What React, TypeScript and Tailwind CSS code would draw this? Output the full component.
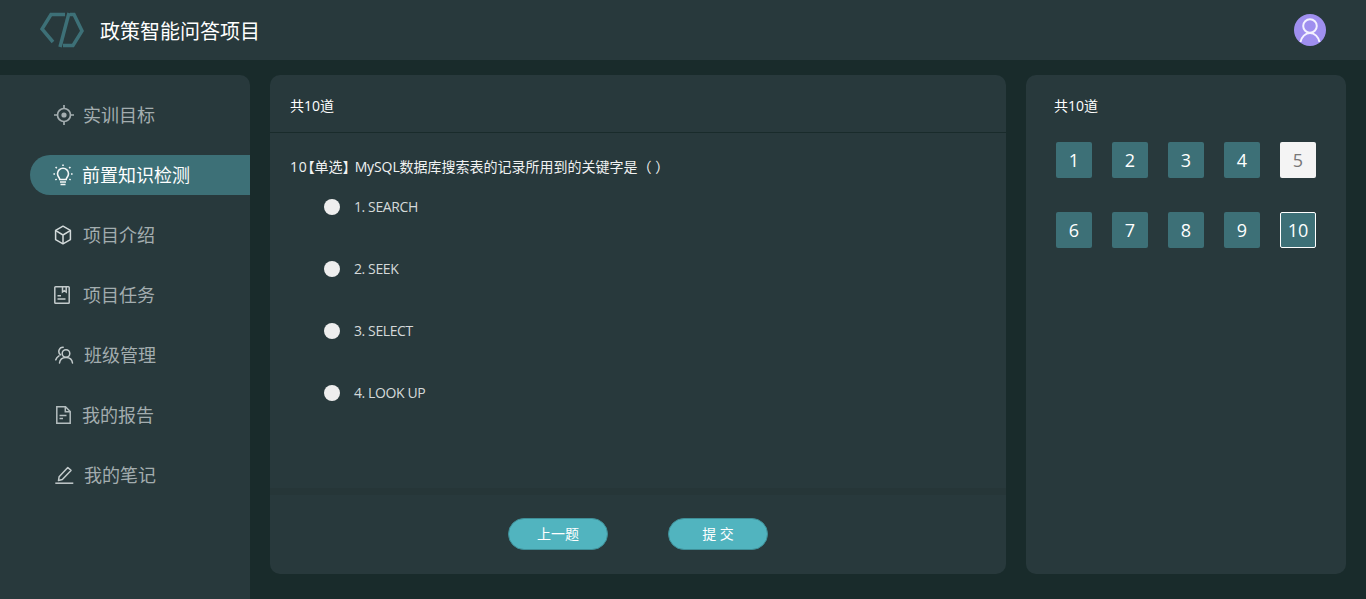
import React from 'react';

const Target = () => (
  <svg width="22" height="22" viewBox="0 0 22 22" fill="none" stroke="currentColor" strokeWidth="1.7">
    <circle cx="11" cy="11" r="6.5" />
    <circle cx="11" cy="11" r="2.6" fill="currentColor" stroke="none" />
    <path d="M11 1v3.500M11 17.500V21M1 11h3.500M17.500 11H21" />
  </svg>
);

const Bulb = () => (
  <svg width="20" height="22" viewBox="0 0 20 22" fill="none" stroke="#f4f6f6" strokeWidth="1.6">
    <path d="M6.800 15.500c0-2-2.300-2.800-2.300-5.700a5.500 5.500 0 0 1 11 0c0 2.900-2.300 3.700-2.300 5.700z" />
    <path d="M7 18h6M7.500 20.500h5" />
    <path d="M10 .5v1.600M2.600 3l1.200 1.200M17.400 3l-1.200 1.200M.4 10h1.600M18 10h1.600M2.400 16l1.200-1M17.600 16l-1.200-1" />
  </svg>
);

const Box = () => (
  <svg width="18" height="20" viewBox="0 0 18 20" fill="none" stroke="#d3dada" strokeWidth="1.5" strokeLinejoin="round">
    <path d="M9 1.200l7.400 4.200v9.200L9 18.800l-7.400-4.200V5.400z" />
    <path d="M1.800 5.600L9 10l7.200-4.400M9 10v8.600" />
  </svg>
);

const Task = () => (
  <svg width="16" height="18" viewBox="0 0 16 18" fill="none" stroke="#c3cbcc" strokeWidth="1.5">
    <rect x="0.8" y="0.8" width="14.400" height="16.400" rx="0.8" />
    <path d="M8.500 1v5l1.800-1.300L12.200 6V1" />
    <path d="M3.500 9.800h3.500M3.500 13h8" />
  </svg>
);

const Users = () => (
  <svg width="19" height="18" viewBox="0 0 19 18" fill="none" stroke="#c3cbcc" strokeWidth="1.5" strokeLinecap="round">
    <circle cx="11" cy="7.500" r="3.800" />
    <path d="M4.500 17c.4-3.400 3-5.600 6.500-5.600s6.100 2.200 6.500 5.600" />
    <path d="M5.600 8.800A4.200 4.200 0 0 1 8.200 1.200M4 9.800C2.400 10.800 1.300 12 .8 13.800" />
  </svg>
);

const Report = () => (
  <svg width="15" height="18" viewBox="0 0 15 18" fill="none" stroke="#b4bebf" strokeWidth="1.5">
    <path d="M.8.8h8.700l4.700 4.700v11.700H.8z" />
    <path d="M9.300.8v5h5M3.500 9.500h7M3.500 12.500h3.500" />
  </svg>
);

const Pen = () => (
  <svg width="19" height="18" viewBox="0 0 19 18" fill="none" stroke="#c3cbcc" strokeWidth="1.5" strokeLinejoin="round">
    <path d="M3.500 14.500l.6-3.700L12.800 1.500l3.200 2.900-8.700 9.200z" />
    <path d="M.3 17.200h18" />
  </svg>
);

const nav = [
  { label: '实训目标', icon: <Target />, pad: 'pl-[23px]', gap: 'gap-[8px]' },
  { label: '前置知识检测', icon: <Bulb />, pad: 'pl-[23px]', gap: 'gap-[9px]', active: true },
  { label: '项目介绍', icon: <Box />, pad: 'pl-[24px]', gap: 'gap-[11px]' },
  { label: '项目任务', icon: <Task />, pad: 'pl-[24px]', gap: 'gap-[13px]' },
  { label: '班级管理', icon: <Users />, pad: 'pl-[25px]', gap: 'gap-[10px]' },
  { label: '我的报告', icon: <Report />, pad: 'pl-[26px]', gap: 'gap-[11px]' },
  { label: '我的笔记', icon: <Pen />, pad: 'pl-[25px]', gap: 'gap-[10px]' },
];

const options = ['1. SEARCH', '2. SEEK', '3. SELECT', '4. LOOK UP'];
const numbers = [1, 2, 3, 4, 5, 6, 7, 8, 9, 10];

export default function App() {
  return (
    <div className="h-[599px] overflow-hidden bg-[#192b2b] text-white" style={{ fontFamily: '"Open Sans", "Noto Sans CJK SC", sans-serif' }}>
      <header className="h-[60px] bg-[#28393c] flex items-center justify-between pl-[40px] pr-[40px]">
        <div className="flex items-center gap-[16px]">
          <svg width="44" height="36" viewBox="0 0 44 36" fill="none" stroke="#3d7077" strokeWidth="3.5">
            <path d="M25 2.500H11L2 17 13 30" />
            <path d="M29 1L20 35" />
            <path d="M30 2.500h4L42 19 33 33.500H23" />
          </svg>
          <span className="text-[20px] leading-none text-white pt-[3px]">政策智能问答项目</span>
        </div>
        <div className="w-[32px] h-[32px] rounded-full bg-[#9f8fef] overflow-hidden flex items-center justify-center">
          <svg width="22" height="24" viewBox="0 0 22 24" fill="none" stroke="#f3f1ff" strokeWidth="2">
            <circle cx="11" cy="8" r="6.800" />
            <path d="M1.500 24c1-5 4.800-9 9.500-9s8.500 4 9.500 9" />
          </svg>
        </div>
      </header>

      <div className="flex pt-[15px] h-[539px]">
        <aside className="w-[250px] h-[524px] bg-[#28393c] rounded-tr-[10px] pl-[30px] pt-[20px]">
          {nav.map((item) => (
            <div
              key={item.label}
              className={`h-[40px] mb-[20px] flex items-center rounded-l-full text-[18px] ${item.pad} ${item.gap} ${item.active ? 'bg-[#3d7077] text-white' : 'text-[#a3adaf]'}`}
            >
              {item.icon}
              <span>{item.label}</span>
            </div>
          ))}
        </aside>

        <main className="ml-[20px] w-[736px] h-[499px] bg-[#28393c] rounded-[10px] flex flex-col">
          <div className="h-[58px] border-b border-[#192b2b] pl-[20px] pt-[21px] text-[14px] leading-[20px]">共10道</div>
          <div className="h-[355px] pl-[20px] pt-[23px]">
            <p className="text-[14px] leading-[22px] text-[#f0f2f2]">
              <span className="tracking-[0.8px]">10</span>
              <span className="[font-feature-settings:'halt']">【单选】</span>
              <span className="ml-[5px] tracking-[-0.1px]">MySQL</span>
              <span>数据库搜索表的记录所用到的关键字是（ ）</span>
            </p>
            <ul className="pl-[34px] pt-[13px]">
              {options.map((o) => (
                <li key={o} className="h-[62px] flex items-start pt-[6px] gap-[14px] text-[14px] leading-[20px] tracking-[-0.4px] text-[#d5d9da]">
                  <span className="mt-[2px] w-[16px] h-[16px] rounded-full bg-[#eeeeee]" />
                  <span>{o}</span>
                </li>
              ))}
            </ul>
          </div>
          <div className="flex-1 border-t-[7px] border-[#263638] rounded-b-[10px] flex items-start justify-center gap-[60px] pt-[23px]">
            <button className="w-[100px] h-[32px] rounded-full bg-[#51b4bf] border border-[#3f8f98] text-[14px] pb-[2px]">上一题</button>
            <button className="w-[100px] h-[32px] rounded-full bg-[#51b4bf] border border-[#3f8f98] text-[14px] pb-[2px]">提 交</button>
          </div>
        </main>

        <section className="ml-[20px] w-[320px] h-[499px] bg-[#28393c] rounded-[10px] pl-[30px] pr-[30px] pt-[21px]">
          <div className="-ml-[2px] text-[14px] leading-[20px]">共10道</div>
          <div className="mt-[26px] grid grid-cols-[repeat(5,36px)] gap-x-[20px] gap-y-[34px]">
            {numbers.map((n) => (
              <div
                key={n}
                className={`w-[36px] h-[36px] rounded-[2px] flex items-center justify-center text-[18px] ${n === 5 ? 'bg-[#f4f4f4] text-[#777777]' : 'bg-[#3d7077] text-white'} ${n === 10 ? 'border border-white' : ''}`}
              >
                {n}
              </div>
            ))}
          </div>
        </section>
      </div>
    </div>
  );
}
